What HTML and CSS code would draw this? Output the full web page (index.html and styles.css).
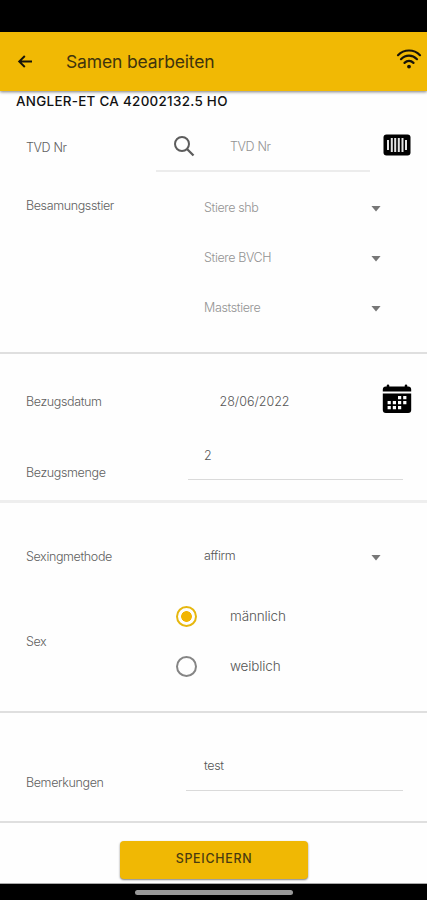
FILE: index.html
```html
<!DOCTYPE html>
<html lang="de">
<head>
<meta charset="utf-8">
<meta name="viewport" content="width=device-width, initial-scale=1">
<title>Samen bearbeiten</title>
<link rel="stylesheet" href="styles.css">
</head>
<body>
<div class="screen">
  <div class="statusbar"></div>
  <header class="appbar">
    <svg class="back" width="16" height="16" viewBox="0 0 16 16"><path d="M15 7.500H2.500M7.800 2L2.200 7.500 7.800 13" fill="none" stroke="#17140a" stroke-width="1.900"/></svg>
    <h1>Samen bearbeiten</h1>
    <svg class="wifi" width="26" height="22" viewBox="0 0 26 22"><g fill="none" stroke="#17140a" stroke-width="2.200" stroke-linecap="round"><path d="M2 7.200C8 .9 18 .9 24 7.200"/><path d="M5 11.200c4.600-4.800 11.400-4.800 16 0"/><path d="M8.500 14.900c2.700-2.700 6.300-2.700 9 0"/></g><circle cx="13" cy="18.600" r="1.900" fill="#17140a"/></svg>
  </header>
  <h2>ANGLER-ET CA 42002132.5 HO</h2>

  <section class="bull">
    <div class="row row-tvd">
      <label>TVD Nr</label>
      <div class="search">
        <svg width="22" height="22" viewBox="0 0 22 22"><g fill="none" stroke="#5c5c5c" stroke-width="2"><circle cx="9" cy="9" r="7"/><path d="M14 14l6.500 6.500" stroke-width="2.300"/></g></svg>
        <span class="hint">TVD Nr</span>
      </div>
      <svg class="barcode" width="28" height="22" viewBox="0 0 28 22"><rect x=".5" y=".5" width="27" height="21" rx="3" fill="#000"/><path d="M5 6v10M23 6v10" stroke="#fff" stroke-width="1.800"/><path d="M8.800 4v14M12.200 4v14M15.800 4v14M19.500 4v14" stroke="#e4e4e4" stroke-width="2"/></svg>
    </div>
    <div class="row row-bull">
      <label>Besamungsstier</label>
      <div class="selects">
        <div class="select hint"><span>Stiere shb</span><i class="caret"></i></div>
        <div class="select hint"><span>Stiere BVCH</span><i class="caret"></i></div>
        <div class="select hint"><span>Maststiere</span><i class="caret"></i></div>
      </div>
    </div>
  </section>

  <section class="supply">
    <div class="row row-date">
      <label>Bezugsdatum</label>
      <div class="date">28/06/2022</div>
      <svg class="calendar" width="30" height="30" viewBox="0 0 30 30"><path d="M.8 7.400V5.500A3 3 0 0 1 3.800 2.600H26.200A3 3 0 0 1 29.200 5.500V7.400Z"/><path d="M6 1.800v3M24 1.800v3" stroke="#000" stroke-width="2.600" stroke-linecap="round"/><path d="M.8 9.400H29.200V26a3 3 0 0 1-3 3H3.800a3 3 0 0 1-3-3Z"/><path fill="#fff" d="M16 12h3.200v3.200h-3.200zM21.200 12h3.200v3.200h-3.200zM5.600 17h3.200v3.200h-3.200zM10.800 17h3.200v3.200h-3.200zM16 17h3.200v3.200h-3.200zM21.200 17h3.200v3.200h-3.200zM5.600 22h3.200v3.200h-3.200zM10.800 22h3.200v3.200h-3.200zM16 22h3.200v3.200h-3.200z"/></svg>
    </div>
    <div class="row row-amount">
      <label>Bezugsmenge</label>
      <div class="field">2</div>
    </div>
  </section>

  <section class="sexing">
    <div class="row row-method">
      <label>Sexingmethode</label>
      <div class="select"><span>affirm</span><i class="caret"></i></div>
    </div>
    <div class="row row-sex">
      <label>Sex</label>
      <div class="radios">
        <div class="radio"><i class="dot checked"></i><span>männlich</span></div>
        <div class="radio"><i class="dot"></i><span>weiblich</span></div>
      </div>
    </div>
  </section>

  <section class="remarks">
    <div class="row row-remarks">
      <label>Bemerkungen</label>
      <div class="field">test</div>
    </div>
  </section>

  <div class="actions"><button type="button">SPEICHERN</button></div>
  <div class="navbar"><i></i></div>
</div>
</body>
</html>
```
FILE: styles.css
```css
* { box-sizing: border-box; }
body {
  margin: 0;
  background: #fefefe;
  color: #555;
  font: 300 12.5px/20px Inter, "Liberation Sans", sans-serif;
  letter-spacing: -.37px;
}
.screen { display: flex; flex-direction: column; width: 427px; height: 900px; overflow: hidden; white-space: nowrap; }
.statusbar { height: 32px; background: #000; }
.appbar {
  display: flex;
  align-items: center;
  height: 59px;
  padding: 0 5px 0 17px;
  background: #f1b904;
  box-shadow: 0 1px 3px rgba(0, 0, 0, .5);
}
h1 { flex: 1; margin: 0 0 0 33px; font-size: 17.5px; font-weight: 400; letter-spacing: -.15px; color: #40340d; }
.wifi { margin-top: -6px; }
h2 { height: 20px; margin: 1px 0 0 16px; font-size: 13.4px; font-weight: 500; line-height: 19px; letter-spacing: .3px; color: #111; }

section { border-bottom: 2px solid #dfdfdf; }
.row { display: grid; grid-template-columns: 160px 1fr; padding-left: 26px; }
label { padding-top: 1px; color: #606060; }
.hint { color: #939393; }

.bull { height: 242px; padding-top: 10px; }
.row-tvd { grid-template-columns: 130px 214px 28px; height: 50px; align-items: center; }
.row-tvd .barcode { margin: -5px 0 0 13px; }
.search { display: flex; align-items: center; gap: 35px; height: 50px; padding-left: 17px; border-bottom: 2px solid #ececec; }
.search .hint { padding-top: 2px; }
.row-bull { padding-top: 10px; }
.row-bull label { padding-top: 14px; }
.select { display: flex; align-items: center; justify-content: space-between; height: 50px; padding: 0 46px 0 18px; }
.select.hint span { padding-top: 1px; }
.caret { width: 10px; height: 6px; margin-top: 3px; background: #777; clip-path: polygon(0 0, 100% 0, 50% 100%); }

.supply { height: 149px; border-bottom: 3px solid #eee; padding-top: 22px; }
.row-date { grid-template-columns: 193.5px 162.5px 30px; height: 50px; align-items: center; }
.date { padding-top: 1px; letter-spacing: 0; }
.calendar { margin-top: -5px; }
.row-amount { height: 54px; }
.row-amount label { padding-top: 37px; }
.field { width: 217px; height: 54px; padding: 19px 0 0 18px; border-bottom: 1px solid #dadada; }
.row-amount .field { width: 215px; margin-left: 2px; padding: 20px 0 0 16px; }

.sexing { height: 210px; padding-top: 28px; }
.row-method { height: 50px; align-items: center; }
.row-sex { grid-template-columns: 150px 1fr; height: 100px; margin-top: 10px; align-items: center; }
.radio { display: flex; align-items: center; gap: 33px; height: 50px; font-size: 13.5px; letter-spacing: -.15px; }
.dot { width: 21px; height: 21px; border: 2px solid #858585; border-radius: 50%; }
.dot.checked { border-color: #e6b70f; background: radial-gradient(circle, #f1b504 5px, transparent 5.7px); }

.remarks { height: 110px; padding-top: 24px; }
.row-remarks label { padding-top: 36px; }

.actions { height: 61px; padding: 18px 0 0 120px; border-bottom: 1px solid #aaa; }
button {
  width: 188px;
  height: 38px;
  padding: 0 0 2px;
  border: 0;
  border-radius: 4px;
  background: #f0b804;
  box-shadow: 0 1px 2px rgba(0, 0, 0, .5);
  color: #493b10;
  font: 500 12.4px/36px Inter, "Liberation Sans", sans-serif;
  letter-spacing: .75px;
}
.navbar { flex: 1; padding: 6px 0 0 135px; background: #000; }
.navbar i { display: block; width: 158px; height: 5px; border-radius: 3px; background: #999; }
```
